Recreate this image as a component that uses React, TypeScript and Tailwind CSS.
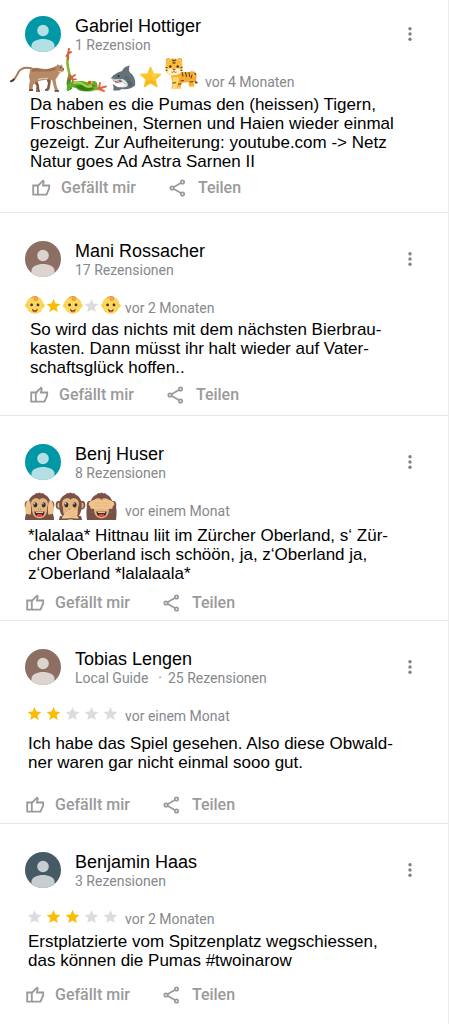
import React from 'react';

type Symbol = 'gold' | 'gray' | 'baby' | 'deaf' | 'mute' | 'blind' | 'puma' | 'frog' | 'shark' | 'bigStar' | 'tiger';

interface Review {
    name: string;
    meta: string[];
    avatar: string;
    rating: Symbol[];
    date: string;
    lines: string[];
    cardClass: string;
    ratingClass: string;
    textClass: string;
    actionsClass: string;
}

const reviews: Review[] = [
    {
        name: 'Gabriel Hottiger',
        meta: ['1 Rezension'],
        avatar: 'text-[#0097a7]',
        rating: ['puma', 'frog', 'shark', 'bigStar', 'tiger'],
        date: 'vor 4 Monaten',
        lines: [
            'Da haben es die Pumas den (heissen) Tigern,',
            'Froschbeinen, Sternen und Haien wieder einmal',
            'gezeigt. Zur Aufheiterung: youtube.com -> Netz',
            'Natur goes Ad Astra Sarnen II',
        ],
        cardClass: 'pt-4 pb-[14px]',
        ratingClass: '-mt-[6px] ml-[10px] items-end gap-[6px]',
        textClass: 'mt-[3px] pl-[30px]',
        actionsClass: 'mt-[7px] pl-8',
    },
    {
        name: 'Mani Rossacher',
        meta: ['17 Rezensionen'],
        avatar: 'text-[#8d6e63]',
        rating: ['baby', 'gold', 'baby', 'gray', 'baby'],
        date: 'vor 2 Monaten',
        lines: [
            'So wird das nichts mit dem nächsten Bierbrau-',
            'kasten. Dann müsst ihr halt wieder auf Vater-',
            'schaftsglück hoffen..',
        ],
        cardClass: 'pt-7 pb-[10px]',
        ratingClass: 'mt-[19px] ml-[25px] items-start gap-[5px]',
        textClass: 'mt-[2px] pl-[30px]',
        actionsClass: 'mt-2 pl-[30px]',
    },
    {
        name: 'Benj Huser',
        meta: ['8 Rezensionen'],
        avatar: 'text-[#0097a7]',
        rating: ['deaf', 'mute', 'blind'],
        date: 'vor einem Monat',
        lines: [
            '*lalalaa* Hittnau liit im Zürcher Oberland, s‘ Zür-',
            'cher Oberland isch schöön, ja, z‘Oberland ja,',
            'z‘Oberland *lalalaala*',
        ],
        cardClass: 'pt-7 pb-[7px]',
        ratingClass: 'mt-[9px] ml-6 items-end gap-2',
        textClass: 'mt-[5px] pl-7',
        actionsClass: 'mt-[10px] pl-[26px]',
    },
    {
        name: 'Tobias Lengen',
        meta: ['Local Guide', '25 Rezensionen'],
        avatar: 'text-[#8d6e63]',
        rating: ['gold', 'gold', 'gray', 'gray', 'gray'],
        date: 'vor einem Monat',
        lines: [
            'Ich habe das Spiel gesehen. Also diese Obwald-',
            'ner waren gar nicht einmal sooo gut.',
        ],
        cardClass: 'pt-7 pb-2',
        ratingClass: 'mt-[19px] ml-[25px] items-start gap-[5px]',
        textClass: 'mt-2 pl-7',
        actionsClass: 'mt-[23px] pl-[26px]',
    },
    {
        name: 'Benjamin Haas',
        meta: ['3 Rezensionen'],
        avatar: 'text-[#455a64]',
        rating: ['gray', 'gold', 'gold', 'gray', 'gray'],
        date: 'vor 2 Monaten',
        lines: [
            'Erstplatzierte vom Spitzenplatz wegschiessen,',
            'das können die Pumas #twoinarow',
        ],
        cardClass: 'pt-7 pb-[10px]',
        ratingClass: 'mt-[19px] ml-[25px] items-start gap-[5px]',
        textClass: 'mt-[3px] pl-7',
        actionsClass: 'mt-[15px] pl-[26px]',
    },
];

const STAR = 'M12 1.5l3.1 7.3 7.9.7-6 5.2 1.8 7.8-6.8-4.1-6.8 4.1L7 14.7 1 9.5l7.9-.7z';

const Star: React.FC<{ className: string }> = ({ className }) => (
    <svg viewBox="0 0 24 24" className={`h-[15px] w-[19px] ${className}`} fill="currentColor" aria-hidden="true">
        <path d={STAR} />
    </svg>
);

const BigStar: React.FC = () => (
    <svg viewBox="0 0 26 26" className="h-[26px] w-[26px]" aria-hidden="true">
        <path d="M12.500 1.600l2.800 6.500 6.900.5-5.200 4.700 1.800 7.200-6.200-3.900-6.100 3.900 1.800-7.200-5.300-4.700 6.900-.5z" fill="#fdc52c" stroke="#fdc52c" strokeWidth="1.600" strokeLinejoin="round" />
        <path d="M12.500 3l2.300 5.700 5.400.5-5.500 1.500z" fill="#ffd95a" />
        <path d="M7 19.500l5.500-3.300 5.500 3.300-1.200-4.200-4.300-1.200-4.300 1.400z" fill="#f7b71c" />
    </svg>
);

const Baby: React.FC = () => (
    <svg viewBox="0 0 20 20" className="-mt-[3px] -mr-px h-[20px] w-[20px]" aria-hidden="true">
        <circle cx="9.800" cy="10" r="8.700" fill="#fbd75b" />
        <ellipse cx="1.700" cy="10.600" rx="1.700" ry="1.900" fill="#fbd04a" />
        <ellipse cx="18" cy="10.600" rx="1.700" ry="1.900" fill="#fbd04a" />
        <path d="M6.700 3.100c1.400-2.500 6-2 5.900.6-.1 2.200-3.500 2.200-3.400.3 0-1 1.500-1.200 1.800-.4" fill="none" stroke="#ec8a45" strokeWidth="1.100" strokeLinecap="round" />
        <circle cx="6.600" cy="9.900" r="1.400" fill="#4a352b" />
        <circle cx="13" cy="9.900" r="1.400" fill="#4a352b" />
        <path d="M7 14c1.800.8 3.900.8 5.700 0-.2 2-1.200 3.200-2.900 3.200S7.200 16 7 14z" fill="#7a2c22" />
        <path d="M8.300 14.300h3.200l-.4.900H8.700z" fill="#fff" />
        <ellipse cx="9.900" cy="16.300" rx="1.300" ry=".7" fill="#ee5545" />
    </svg>
);

const Monkey: React.FC<{ kind: 'deaf' | 'mute' | 'blind' }> = ({ kind }) => (
    <svg viewBox="0 0 32 30" className="h-[30px] w-[31px]" aria-hidden="true">
        {kind !== 'mute' && <path d="M1 29.500c0-5 3-8 7-8h16c4 0 7 3 7 8z" fill="#795247" />}
        <ellipse cx="4.500" cy="14" rx="3.800" ry="4.500" fill="#795247" />
        <ellipse cx="27.500" cy="14" rx="3.800" ry="4.500" fill="#795247" />
        <ellipse cx="4.700" cy="14.300" rx="2.200" ry="3" fill="#e7b57e" />
        <ellipse cx="27.300" cy="14.300" rx="2.200" ry="3" fill="#e7b57e" />
        <path d="M16 1l2 1 1.800-.5L21 3c4.600 2 6.600 6 6.600 11.500C27.600 24 23 29 16 29S4.400 24 4.400 14.500C4.400 9 6.400 5 11 3l2-1.600 1 .6z" fill="#795247" />
        <path d="M16 8.500c-2-2.700-8.700-2-8.700 4.300 0 2.300 1 3.500 1 5.600 0 5.600 2.800 9.300 7.700 9.300s7.700-3.700 7.700-9.300c0-2.100 1-3.300 1-5.600 0-6.300-6.700-7-8.700-4.300z" fill="#e6b57f" />
        {kind !== 'blind' && (
            <>
                <ellipse cx="11.700" cy="13.800" rx="2.100" ry="2.700" fill="#303034" />
                <ellipse cx="20.300" cy="13.800" rx="2.100" ry="2.700" fill="#303034" />
                <circle cx="11" cy="12.700" r=".8" fill="#dbe8ef" />
                <circle cx="19.600" cy="12.700" r=".8" fill="#dbe8ef" />
                <path d="M14.500 18l.8.700M17.500 18l-.8.700" stroke="#795247" strokeWidth=".9" />
            </>
        )}
        {kind !== 'mute' && (
            <>
                <path d="M10.800 20.700h10.400c0 3.800-2 5.300-5.200 5.300s-5.200-1.500-5.200-5.300z" fill="#51251f" />
                <path d="M12 21h8l-.5 1h-7z" fill="#fff" />
                <ellipse cx="16" cy="24.500" rx="3" ry="1.300" fill="#f04842" />
            </>
        )}
        {kind === 'deaf' && (
            <>
                <path d="M3 26C.5 21 1 15 2.500 11.500 3.700 9 6 9 6.800 12c.8 4 .6 8 .2 11l-1 4z" fill="#f0c48c" />
                <path d="M29 26c2.500-5 2-11 .5-14.500C28.300 9 26 9 25.200 12c-.8 4-.6 8-.2 11l1 4z" fill="#f0c48c" />
                <path d="M1 29.500l1-6.500 5 1 1.500 5.500zM31 29.500L30 23l-5 1-1.500 5.500z" fill="#795247" />
            </>
        )}
        {kind === 'mute' && (
            <>
                <path d="M4 29.500l1-4 6-1 3 5zM28 29.500l-1-4-6-1-3 5z" fill="#795247" />
                <path d="M7 28c1-4 4-5 6-7l4-3c1.500-1 2.600.3 1.500 1.500L16 22l5-2.500c2-.7 2.700 1.300 1 2.300 2 0 2 2 .5 2.500l2 3.700H20l-4-1-3 1z" fill="#f2c890" />
                <path d="M12 24l5-3M15 25l6-3M17 26.500l5-2" stroke="#d59b65" strokeWidth=".6" />
            </>
        )}
        {kind === 'blind' && (
            <>
                <path d="M1 29.500C.2 24 .2 18 1.500 13l5 4-2 12.500zM31 29.500c.8-5.500.8-11.500-.5-16.500l-5 4 2 12.500z" fill="#795247" />
                <path d="M3 11.500c3-2 6-3.500 9-3 2 .3 4 1.200 4 2.200 0-1 2-1.900 4-2.200 3-.5 6 1 9 3l-2 6.500c-3-.5-6 1-9 .5-1.500-.3-2-1.200-2-2.200 0 1-.5 1.900-2 2.200-3 .5-6-1-9-.5z" fill="#f0c48c" />
                <path d="M9 12h6M9 14.700h6M17 12h6M17 14.700h6" stroke="#dda974" strokeWidth=".5" />
            </>
        )}
    </svg>
);

const Puma: React.FC = () => (
    <svg viewBox="0 0 55 30" className="h-[30px] w-[55px]" aria-hidden="true">
        <path d="M22 6.500c-6-1.500-11-.5-13.500 3.500-1.700 3-2.500 6.500-5.500 8" fill="none" stroke="#a5785a" strokeWidth="1.900" strokeLinecap="round" />
        <path d="M3.800 17.600c-.8.900-1.800 1.400-2.800 1.600" fill="none" stroke="#49372d" strokeWidth="2" strokeLinecap="round" />
        <path d="M25 15l-1 5 2.500 4-.5 3.500 3.500 1-.5-5-1.500-4 3-4zM36 16l2 5-1 5-2 1.500h4.500l1-6 .5-6z" fill="#80593f" />
        <path d="M20 8c2-2.500 6-3 11-1.500 4 .8 8 .3 12-.5l4-2.500.8-1.500 1.200 1.200h2l1-1 .4 2L54 7l-.5 2.500-3.500 1-2 3.500-2.500 3.500 1 6 1.500 4.500 1.500 1h-4.500l-1.500-5.500L42 18l-5-.5-6 1-5 1.500-3 3-.5 4.500 1 1.500h-4.200l-.3-6 1-4-1-4z" fill="#b68a66" />
        <path d="M22 7c4-2 8 .5 12 .5s8-1.500 12-3l-1 3.500c-7 3-16 .5-23 2z" fill="#9d7050" />
        <path d="M28 17.500c3-.8 6-1.500 10-1M48 9.500c1.500.5 3 .5 4.500 0" fill="none" stroke="#dcc4a8" strokeWidth="1.300" />
        <path d="M19 28h4M26 29h4M35 28h3.500M44.500 29h4.500" stroke="#5b4233" strokeWidth="1.400" />
        <circle cx="50.500" cy="5.600" r=".7" fill="#3f352e" />
        <path d="M53.500 6.500v1.300" stroke="#59443a" strokeWidth="1" />
    </svg>
);

const Frog: React.FC = () => (
    <svg viewBox="0 0 43 44" className="h-[44px] w-[43px]" aria-hidden="true">
        <path d="M5 40C2 36 4 32 5 29" fill="none" stroke="#4c8f20" strokeWidth="4" strokeLinecap="round" />
        <path d="M5 29C4 22 1 17 3 9" fill="none" stroke="#86b52f" strokeWidth="2.600" strokeLinecap="round" />
        <path d="M3 11V6l1-5M3 6l3-2M3 6L1.500 8" fill="none" stroke="#de5c40" strokeWidth="2" strokeLinecap="round" />
        <path d="M2 43c-1-5 1-8 5-9.500l10-.5c3 0 5 2 8 1 4-2 7-1 7.500 3 .5 3-1.500 5-4.500 6-7 1-14 1-17-3l-5-1-2 4z" fill="#5fae27" />
        <path d="M9 38c4 1 6 5 12 5 3 0 6-1 8-3-5 0-8-1-12-3z" fill="#357c1a" />
        <path d="M9 35c5-1 8 0 10 2s5 2 7 1" fill="none" stroke="#a7d840" strokeWidth="2" strokeLinecap="round" />
        <path d="M8 34l-1-5-3-2M7 29l3-2M7 30H3M7 31l4 .5" fill="none" stroke="#d95c3d" strokeWidth="1.700" strokeLinecap="round" />
        <path d="M30 41l4-.5" stroke="#82b62e" strokeWidth="3" />
        <path d="M33 40.500l8-2M34 41l5 2M34 40l1-5M36 40l3-1" fill="none" stroke="#e16646" strokeWidth="1.900" strokeLinecap="round" />
        <ellipse cx="25" cy="34.500" rx="2.500" ry="2" fill="#c9c842" />
        <circle cx="24.500" cy="34.500" r="1.500" fill="#d8402d" />
        <path d="M27 38l3-.5" stroke="#b7402d" strokeWidth="1.200" />
    </svg>
);

const Shark: React.FC = () => (
    <svg viewBox="0 0 30 30" className="h-[30px] w-[30px]" aria-hidden="true">
        <path d="M3 16c3-4 7-6 11-7 1-3 4-5 8-5.500-1.500 2.500-1.500 5 0 7 4 3 6 8 5 13-3 3-8 4.500-13 3.500l-3 1.500H5c1-2 .5-4-.5-6.500l5 3c4 .5 8 0 9-2.500l-4-2-7 0-2-2z" fill="#66727a" />
        <path d="M3.500 16.500c4 .5 8 1 11 .5 4 2 6 4.500 5 7-2 2-6 1.500-8.500.5 4 .5 6.500-1 6.500-3-3-1-6 0-8.500 0-2.500-1-4-3-5.500-5z" fill="#dce3e7" />
        <path d="M5 17.500l8 .8 1.500 1.500-5.500 1c-1.800 0-3.300-1.800-4-3.300z" fill="#82535b" />
        <path d="M6 17.500l1 1.700 1-1.300 1 1.700 1-1.300 1 1.500" fill="none" stroke="#fff" strokeWidth=".8" />
        <path d="M18 19c2 1 3 3 3 6l4-2c-1-3-3-5-7-4z" fill="#52616c" />
        <circle cx="10.500" cy="14" r="1" fill="#20262a" />
        <path d="M18 14v3M20 15v3" stroke="#46535b" strokeWidth=".8" />
    </svg>
);

const Tiger: React.FC = () => (
    <svg viewBox="0 0 35 35" className="h-[35px] w-[35px]" aria-hidden="true">
        <path d="M27 15.500c5-.5 5 3 4 6-.8 3 0 3.500 1 4.500" fill="none" stroke="#f7a72a" strokeWidth="2.400" strokeLinecap="round" />
        <path d="M30.500 16.500l1.500 1M31 24.500l2.500 1.500" stroke="#40372f" strokeWidth="1.400" />
        <path d="M10 15h17c3.500 2 4 6 2.500 9l1 5.500h-5.500l-.5-4.500-7 1-1 5.500H7.500l1-6-1.500-6z" fill="#f9ad31" />
        <path d="M8.500 20h6c1 4-.5 6-1.500 11H8.500z" fill="#ffd56f" />
        <path d="M18 15.500l1 3.500M21.500 15.500l1 4M25 15.500l.5 4M28 18l-1 3M17 24l2.500-.5M26 25l3-.5M8.500 26l3-.3M14.500 27h2.500" stroke="#5d452f" strokeWidth="1.100" strokeLinecap="round" />
        <circle cx="4.300" cy="3.500" r="2.500" fill="#f6a526" />
        <circle cx="15.700" cy="3.500" r="2.500" fill="#f6a526" />
        <circle cx="4.300" cy="3.500" r="1.100" fill="#fff0bb" />
        <circle cx="15.700" cy="3.500" r="1.100" fill="#fff0bb" />
        <path d="M1.500 9c0-5 4-7.500 8.500-7.500S18.500 4 18.500 9v3.500c0 4-4 6-8.500 6s-8.500-2-8.500-6z" fill="#fcbc40" />
        <path d="M2.500 13.500c2.500-3 5.500-2 7.500-.5 2-1.500 5-2.500 7.500.5 0 3-3.500 4.500-7.500 4.500s-7.500-1.500-7.500-4.500z" fill="#fff0c8" />
        <path d="M8 2.700l2 1.300 2-1.300M8.500 5.500l1.500.8 1.500-.8M1.500 10.500h2M1.800 13.500l1.800-.3M18.500 10.500h-2M18.200 13.500l-1.800-.3" fill="none" stroke="#5d452f" strokeWidth="1.100" />
        <circle cx="6.300" cy="9.500" r="1.200" fill="#36332f" />
        <circle cx="13.700" cy="9.500" r="1.200" fill="#36332f" />
        <path d="M8.300 12h3.400L10 13.700z" fill="#a34a3d" />
        <path d="M7.500 15c1 .7 1.900.4 2.500-.6.600 1 1.500 1.300 2.500.6" fill="none" stroke="#5d452f" strokeWidth=".8" />
        <path d="M7.500 31h5M14 31h3.500M25.500 29.500H30" stroke="#ffd56f" strokeWidth="1.500" />
    </svg>
);

const RatingSymbol: React.FC<{ symbol: Symbol }> = ({ symbol }) => {
    switch (symbol) {
        case 'gold':
            return <Star className="text-[#fbbc04]" />;
        case 'gray':
            return <Star className="text-[#dadce0]" />;
        case 'baby':
            return <Baby />;
        case 'puma':
            return <Puma />;
        case 'frog':
            return <Frog />;
        case 'shark':
            return <Shark />;
        case 'bigStar':
            return <BigStar />;
        case 'tiger':
            return <Tiger />;
        default:
            return <Monkey kind={symbol} />;
    }
};

const Avatar: React.FC<{ className: string }> = ({ className }) => (
    <svg viewBox="0 0 36 36" className={`h-9 w-9 shrink-0 ${className}`} aria-hidden="true">
        <circle cx="18" cy="18" r="18" fill="currentColor" />
        <circle cx="18" cy="14.500" r="5.800" fill="#fff" fillOpacity=".7" />
        <path d="M6.500 31.800v-2.300c0-4.300 6-6.500 11.500-6.500s11.500 2.200 11.500 6.500v2.300A18 18 0 0 1 18 36a18 18 0 0 1-11.500-4.200z" fill="#fff" fillOpacity=".7" />
    </svg>
);

const LikeIcon: React.FC = () => (
    <svg viewBox="0 0 19 18" className="h-[18px] w-[19px]" fill="none" stroke="currentColor" strokeWidth="1.800" aria-hidden="true">
        <path d="M1.200 6.500h4.600v9.200H1.200z" />
        <path d="M5.800 7L11 1.700l.8.800-.9 4h6.300v2.700L14.500 15.700H5.800" />
    </svg>
);

const ShareIcon: React.FC = () => (
    <svg viewBox="0 0 17 18" className="h-[18px] w-[17px]" fill="none" stroke="currentColor" strokeWidth="1.700" aria-hidden="true">
        <circle cx="3" cy="9" r="1.700" />
        <circle cx="13.500" cy="3" r="1.700" />
        <circle cx="13.500" cy="15" r="1.700" />
        <path d="M4.500 8.200l7.300-4.200M4.500 9.800l7.300 4.200" />
    </svg>
);

const ReviewCard: React.FC<{ review: Review }> = ({ review }) => (
    <article className={`border-b border-[#e6e6e6] last:border-b-0 ${review.cardClass}`}>
        <header className="flex items-start pl-[25px] pr-7">
            <Avatar className={review.avatar} />
            <div className="ml-[14px] flex-1">
                <h2 className="font-['Liberation_Sans',sans-serif] text-[18px] leading-5 text-black">{review.name}</h2>
                <p className="flex gap-[10px] text-[14px] leading-[18px] text-[#85888c]">
                    {review.meta.map((part, index) => (
                        <span key={part} className="flex gap-[6px]">
                            {index > 0 && <span>·</span>}
                            {part}
                        </span>
                    ))}
                </p>
            </div>
            <button type="button" aria-label="Menü" className="mt-[10px] flex h-4 w-5 items-center justify-center text-[#808386]">
                <svg viewBox="0 0 4 16" className="h-4 w-1" fill="currentColor">
                    <circle cx="2" cy="2.800" r="1.700" />
                    <circle cx="2" cy="8" r="1.700" />
                    <circle cx="2" cy="13.200" r="1.700" />
                </svg>
            </button>
        </header>
        <div className={`flex ${review.ratingClass}`}>
            <div className={review.ratingClass.includes('items-end') ? 'flex items-end' : 'flex h-5 items-start'}>
                {review.rating.map((symbol, index) => (
                    <RatingSymbol key={index} symbol={symbol} />
                ))}
            </div>
            <time className="text-[14px] leading-5 text-[#85888c]">{review.date}</time>
        </div>
        <p className={`font-['Liberation_Sans',sans-serif] text-[17px] leading-[19px] text-black ${review.textClass}`}>
            {review.lines.map((line) => (
                <span key={line} className="block">{line}</span>
            ))}
        </p>
        <div className={`flex gap-[33px] text-[16px] leading-5 font-medium text-[#9a9a9a] ${review.actionsClass}`}>
            <button type="button" className="flex items-center gap-[10px]">
                <LikeIcon />
                Gefällt mir
            </button>
            <button type="button" className="flex items-center gap-3">
                <ShareIcon />
                Teilen
            </button>
        </div>
    </article>
);

const App: React.FC = () => {
    return (
        <main className="min-h-screen border-r border-[#ececec] bg-white font-[Roboto,sans-serif]">
            {reviews.map((review) => (
                <ReviewCard key={review.name} review={review} />
            ))}
        </main>
    );
};

export default App;
